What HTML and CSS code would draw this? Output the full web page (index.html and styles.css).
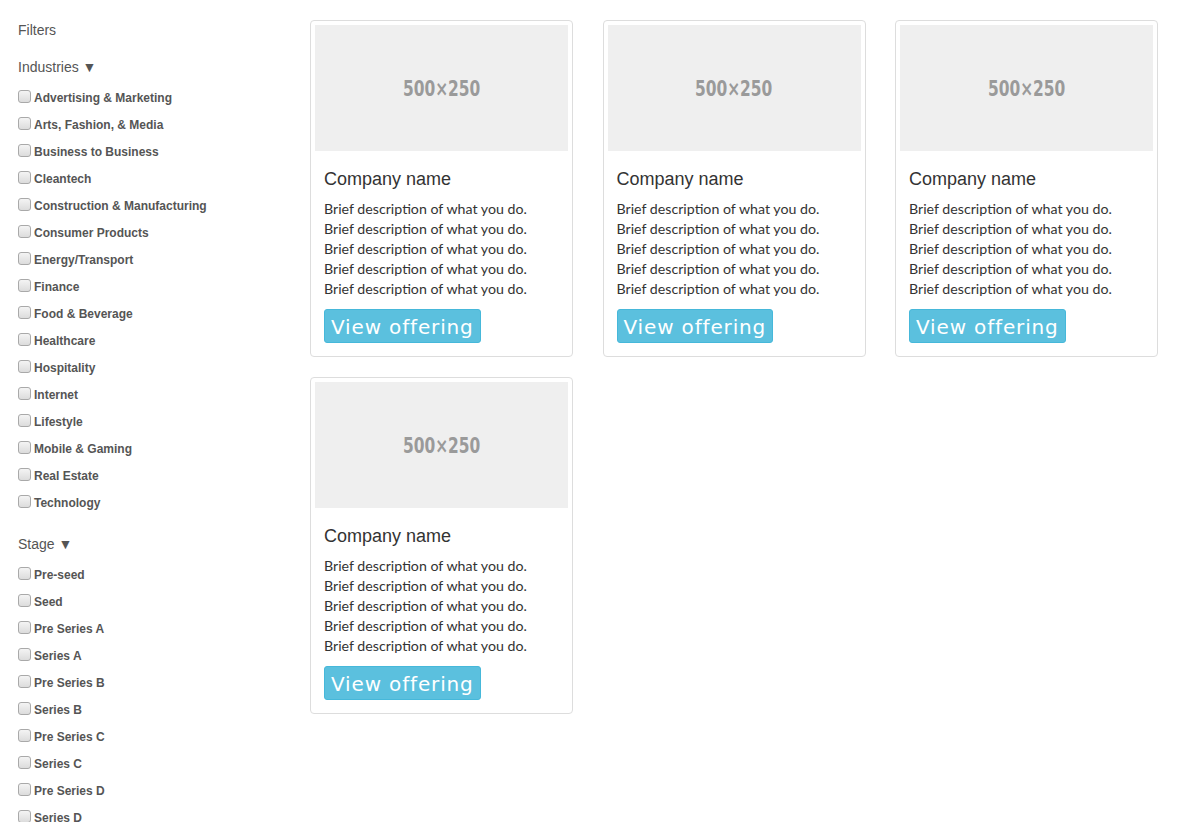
FILE: index.html
```html
<!DOCTYPE html>
<html>
<head>
<meta charset="utf-8">
<link rel="stylesheet" href="styles.css">
</head>
<body>
<div class="page">
  <aside class="sidebar">
    <div class="filters-title">Filters</div>
    <div class="group-title">Industries ▼</div>
    <ul class="options">
      <li><label><input type="checkbox"> Advertising &amp; Marketing</label></li>
      <li><label><input type="checkbox"> Arts, Fashion, &amp; Media</label></li>
      <li><label><input type="checkbox"> Business to Business</label></li>
      <li><label><input type="checkbox"> Cleantech</label></li>
      <li><label><input type="checkbox"> Construction &amp; Manufacturing</label></li>
      <li><label><input type="checkbox"> Consumer Products</label></li>
      <li><label><input type="checkbox"> Energy/Transport</label></li>
      <li><label><input type="checkbox"> Finance</label></li>
      <li><label><input type="checkbox"> Food &amp; Beverage</label></li>
      <li><label><input type="checkbox"> Healthcare</label></li>
      <li><label><input type="checkbox"> Hospitality</label></li>
      <li><label><input type="checkbox"> Internet</label></li>
      <li><label><input type="checkbox"> Lifestyle</label></li>
      <li><label><input type="checkbox"> Mobile &amp; Gaming</label></li>
      <li><label><input type="checkbox"> Real Estate</label></li>
      <li><label><input type="checkbox"> Technology</label></li>
    </ul>
    <div class="group-title">Stage ▼</div>
    <ul class="options">
      <li><label><input type="checkbox"> Pre-seed</label></li>
      <li><label><input type="checkbox"> Seed</label></li>
      <li><label><input type="checkbox"> Pre Series A</label></li>
      <li><label><input type="checkbox"> Series A</label></li>
      <li><label><input type="checkbox"> Pre Series B</label></li>
      <li><label><input type="checkbox"> Series B</label></li>
      <li><label><input type="checkbox"> Pre Series C</label></li>
      <li><label><input type="checkbox"> Series C</label></li>
      <li><label><input type="checkbox"> Pre Series D</label></li>
      <li><label><input type="checkbox"> Series D</label></li>
    </ul>
  </aside>
  <main class="grid">
    <div class="thumb">
      <div class="ph"><span>500×250</span></div>
      <div class="caption">
        <h3>Company name</h3>
        <p>Brief description of what you do.<br>Brief description of what you do.<br>Brief description of what you do.<br>Brief description of what you do.<br>Brief description of what you do.</p>
        <a class="btn">View offering</a>
      </div>
    </div>
    <div class="thumb">
      <div class="ph"><span>500×250</span></div>
      <div class="caption">
        <h3>Company name</h3>
        <p>Brief description of what you do.<br>Brief description of what you do.<br>Brief description of what you do.<br>Brief description of what you do.<br>Brief description of what you do.</p>
        <a class="btn">View offering</a>
      </div>
    </div>
    <div class="thumb">
      <div class="ph"><span>500×250</span></div>
      <div class="caption">
        <h3>Company name</h3>
        <p>Brief description of what you do.<br>Brief description of what you do.<br>Brief description of what you do.<br>Brief description of what you do.<br>Brief description of what you do.</p>
        <a class="btn">View offering</a>
      </div>
    </div>
    <div class="thumb">
      <div class="ph"><span>500×250</span></div>
      <div class="caption">
        <h3>Company name</h3>
        <p>Brief description of what you do.<br>Brief description of what you do.<br>Brief description of what you do.<br>Brief description of what you do.<br>Brief description of what you do.</p>
        <a class="btn">View offering</a>
      </div>
    </div>
  </main>
</div>
</body>
</html>
```

FILE: styles.css
```css
html, body {
  margin: 0;
  padding: 0;
  background: #fff;
}
body {
  font-family: "Liberation Sans", Arial, sans-serif;
  color: #333;
}
.page {
  display: flex;
  align-items: flex-start;
  padding: 20px 0 0 18px;
}
.sidebar {
  width: 292px;
  flex: none;
  color: #555;
}
.filters-title {
  font-size: 14px;
  line-height: 20px;
  margin-bottom: 17px;
}
.group-title {
  font-size: 14px;
  line-height: 20px;
  margin-bottom: 11px;
}
.options {
  list-style: none;
  margin: 0 0 14px 0;
  padding: 0;
}
.options li {
  height: 27px;
  line-height: 20px;
}
.options label {
  display: flex;
  align-items: center;
  font-size: 12px;
  font-weight: bold;
  color: #555;
  height: 20px;
  gap: 3px;
}
.options input {
  -webkit-appearance: none;
  appearance: none;
  margin: 0;
  width: 13px;
  height: 13px;
  box-sizing: border-box;
  border: 1px solid #a9a9a9;
  border-radius: 3px;
  background: linear-gradient(#f4f4f4, #dcdcdc);
  position: relative;
  top: -2px;
}
.grid {
  display: grid;
  grid-template-columns: repeat(3, 263px);
  column-gap: 29.5px;
  row-gap: 20px;
  align-items: start;
}
.thumb {
  border: 1px solid #ddd;
  border-radius: 4px;
  padding: 4px;
  background: #fff;
}
.ph {
  height: 126px;
  background: #efefef;
  display: flex;
  align-items: center;
  justify-content: center;
}
.ph span {
  font-family: "DejaVu Sans Condensed", "DejaVu Sans", sans-serif;
  font-stretch: condensed;
  font-weight: bold;
  font-size: 22px;
  color: #9a9a9a;
  display: inline-block;
  transform: scaleX(0.78);
}
.caption {
  padding: 9px;
}
.caption h3 {
  font-family: "Liberation Sans", Arial, sans-serif;
  font-weight: normal;
  font-size: 18px;
  line-height: 20px;
  margin: 9px 0 10px 0;
  color: #333;
}
.caption p {
  font-family: Lato, "Open Sans", sans-serif;
  font-size: 14.2px;
  line-height: 20px;
  margin: 0 0 10px 0;
  color: #333;
}
.btn {
  display: inline-block;
  background: #5bc0de;
  color: #fff;
  font-family: "DejaVu Sans", Verdana, sans-serif;
  font-size: 20px;
  letter-spacing: 0.85px;
  height: 34px;
  line-height: 34px;
  padding: 0 6px;
  border-radius: 3px;
  border: 1px solid #46b8da;
  box-sizing: border-box;
}
```
